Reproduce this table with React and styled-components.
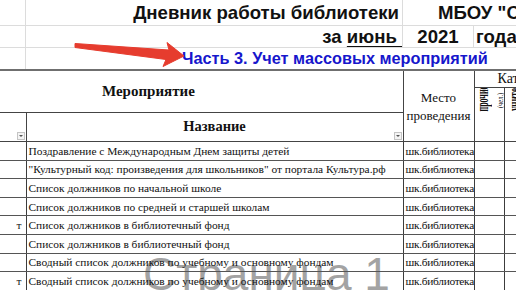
import React from "react";
import styled, { createGlobalStyle } from "styled-components";

const GlobalStyle = createGlobalStyle`
  html, body {
    margin: 0;
    padding: 0;
    background: #fff;
  }
  body {
    width: 516px;
    height: 290px;
    overflow: hidden;
  }
`;

const Sheet = styled.div`
  position: relative;
  width: 516px;
  height: 290px;
  overflow: hidden;
  background: #fff;
`;

// верхняя часть листа с сеткой Excel
const TitleRow = styled.div`
  display: grid;
  grid-template-columns: 26px 377px 71px 1fr;
  height: ${(p) => p.h}px;
  border-bottom: ${(p) => (p.last ? "none" : "1px solid #dcdcdc")};
  font-family: "Liberation Sans", Arial, sans-serif;
  font-weight: 700;
  color: #111;
`;

const TitleCell = styled.div`
  display: flex;
  align-items: center;
  justify-content: ${(p) =>
    p.align === "right" ? "flex-end" : p.align === "center" ? "center" : "flex-start"};
  grid-column: ${(p) => (p.span ? `span ${p.span}` : "auto")};
  border-right: ${(p) => (p.line ? "1px solid #dcdcdc" : "none")};
  padding: ${(p) => p.pad || "0"};
  font-size: 18.6px;
  white-space: nowrap;
  overflow: visible;
  min-width: 0;
`;

const Month = styled.span`
  text-decoration: underline;
  text-decoration-thickness: 1px;
  text-underline-offset: 3px;
`;

const PartTitle = styled.span`
  color: #1616cc;
  font-size: 16.3px;
`;

const Table = styled.table`
  position: relative;
  z-index: 1;
  border-collapse: collapse;
  table-layout: fixed;
  width: 594px;
  border-top: 2px solid #6f6f6f;
  font-family: "Liberation Serif", "Times New Roman", serif;
  color: #111;
`;

const Th = styled.th`
  position: relative;
  padding: 0 0 0 ${(p) => p.indent || 0}px;
  font-weight: 700;
  font-size: ${(p) => p.size || 15}px;
  text-align: ${(p) => (p.indent ? "left" : "center")};
  vertical-align: ${(p) => p.valign || "middle"};
  border-right: 1px solid #444;
  border-bottom: 1px solid #444;
  white-space: nowrap;
  overflow: hidden;
`;

const HeadLabel = styled.div`
  padding-left: ${(p) => p.indent || 0}px;
  text-align: ${(p) => (p.indent ? "left" : "center")};
`;

const PlaceLabel = styled.div`
  font-weight: 400;
  font-size: 13px;
  line-height: 18px;
  padding-top: 2px;
`;

const CategoryLabel = styled.div`
  font-weight: 400;
  font-size: 14px;
  padding-left: 23px;
  text-align: left;
`;

// повёрнутый текст заголовков категорий (снизу вверх)
const Rotated = styled.div`
  display: inline-block;
  height: 44px;
  padding-bottom: 5px;
  writing-mode: vertical-rl;
  transform: rotate(180deg);
  text-align: end;
  white-space: nowrap;
`;

const RotBig = styled.span`
  display: inline-block;
  font-size: 16px;
  font-weight: 700;
  line-height: 11px;
  transform: scaleY(${(p) => p.squeeze || 0.5});
  transform-origin: bottom center;
`;

const RotSmall = styled.span`
  display: inline-block;
  font-size: 9px;
  font-weight: 400;
  line-height: 9px;
  transform: scaleY(0.72);
  transform-origin: bottom center;
`;

const FilterButton = styled.span`
  position: absolute;
  right: 1px;
  bottom: 1px;
  width: 8px;
  height: 8px;
  box-sizing: border-box;
  border: 1px solid #c4c4c4;
  background: #f4f4f4;
  display: flex;
  align-items: center;
  justify-content: center;

  &::after {
    content: "";
    border-left: 2px solid transparent;
    border-right: 2px solid transparent;
    border-top: 2px solid #555;
  }
`;

const Tr = styled.tr`
  height: ${(p) => p.h}px;
`;

const Td = styled.td`
  padding: 0 ${(p) => (p.align === "right" ? "4px" : "0")} 0 ${(p) => (p.align === "right" ? "0" : "2px")};
  font-size: 11.4px;
  letter-spacing: ${(p) => (p.tight ? "-0.3px" : "0")};
  text-align: ${(p) => p.align || "left"};
  border-right: 1px solid #3c3c3c;
  border-bottom: 1px solid #555;
  white-space: nowrap;
  overflow: hidden;
  vertical-align: middle;
`;

// надпись режима разметки страницы, лежит под таблицей
const Watermark = styled.div`
  position: absolute;
  z-index: 0;
  left: 143px;
  top: 251px;
  font-family: "Liberation Sans", Arial, sans-serif;
  font-size: 46px;
  line-height: 1;
  color: #a3a3a3;
  white-space: nowrap;
  pointer-events: none;
`;

const Arrow = styled.svg`
  position: absolute;
  z-index: 2;
  left: 70px;
  top: 38px;
  pointer-events: none;
`;

const rows = [
  { cut: "", name: "Поздравление с Международным Днем защиты детей" },
  { cut: "", name: "\"Культурный код: произведения для школьников\" от портала Культура.рф" },
  { cut: "", name: "Список должников по начальной школе" },
  { cut: "", name: "Список должников по средней и старшей школам" },
  { cut: "т", name: "Список должников в библиотечный фонд" },
  { cut: "", name: "Список должников в библиотечный фонд" },
  { cut: "", name: "Сводный список должников по учебному и основному фондам" },
  { cut: "т", name: "Сводный список должников по учебному и основному фондам" },
];

export default function App() {
  return (
    <Sheet>
      <GlobalStyle />
      <Watermark>Страница 1</Watermark>
      <TitleRow h={25}>
        <TitleCell line />
        <TitleCell line align="right" pad="0 3px 0 0">
          Дневник работы библиотеки
        </TitleCell>
        <TitleCell span={2} pad="0 0 0 35px">
          МБОУ "СОШ"
        </TitleCell>
      </TitleRow>
      <TitleRow h={21}>
        <TitleCell line />
        <TitleCell line align="right">
          за&nbsp;<Month>июнь&nbsp;</Month>
        </TitleCell>
        <TitleCell line align="center">
          2021
        </TitleCell>
        <TitleCell pad="0 0 0 2px">года</TitleCell>
      </TitleRow>
      <TitleRow h={21} last>
        <TitleCell line />
        <TitleCell span={3} pad="0 0 0 156px">
          <PartTitle>Часть 3. Учет массовых мероприятий</PartTitle>
        </TitleCell>
      </TitleRow>

      <Table>
        <colgroup>
          <col style={{ width: 26 }} />
          <col style={{ width: 377 }} />
          <col style={{ width: 71 }} />
          <col style={{ width: 30 }} />
          <col style={{ width: 30 }} />
          <col style={{ width: 60 }} />
        </colgroup>
        <thead>
          <Tr h={15}>
            <Th colSpan={2} rowSpan={2}>
              <HeadLabel indent={102}>Мероприятие</HeadLabel>
            </Th>
            <Th rowSpan={3}>
              <PlaceLabel>
                Место
                <br />
                проведения
              </PlaceLabel>
            </Th>
            <Th colSpan={3}>
              <CategoryLabel>Категории</CategoryLabel>
            </Th>
          </Tr>
          <Tr h={23}>
            <Th rowSpan={2} valign="top">
              <Rotated>
                <RotBig>прочие</RotBig>
                <br />
                <RotSmall>(чел.)</RotSmall>
              </Rotated>
            </Th>
            <Th rowSpan={2} valign="top" indent={2}>
              <Rotated>
                <RotBig squeeze={0.56}>учителя</RotBig>
              </Rotated>
            </Th>
            <Th rowSpan={2} />
          </Tr>
          <Tr h={27}>
            <Th>
              <FilterButton />
            </Th>
            <Th size={14.5}>
              Название
              <FilterButton />
            </Th>
          </Tr>
        </thead>
        <tbody>
          {rows.map((r, i) => (
            <Tr h={18.6} key={i}>
              <Td align="right">{r.cut}</Td>
              <Td>{r.name}</Td>
              <Td tight>шк.библиотека</Td>
              <Td />
              <Td />
              <Td />
            </Tr>
          ))}
        </tbody>
      </Table>

      <Arrow width="120" height="34" viewBox="0 0 120 34">
        <polygon
          points="5,5.5 99,12 97,4.5 114,18 93,28.5 96,21.5 5,9.5"
          fill="#e63c2e"
          stroke="#e63c2e"
          strokeWidth="1"
          strokeLinejoin="round"
        />
      </Arrow>
    </Sheet>
  );
}
